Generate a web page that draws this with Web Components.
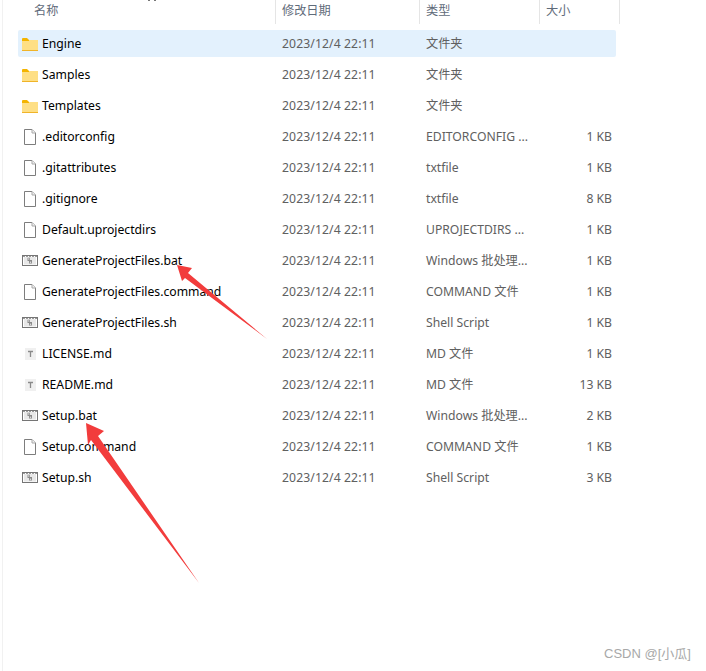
<!DOCTYPE html>
<html>
<head>
<meta charset="utf-8">
<title>Files</title>
<style>
  html, body { margin: 0; background: #fff; }
  body { width: 706px; height: 671px; overflow: hidden; position: relative; font-family: "Noto Sans", "Noto Sans CJK SC", sans-serif; }
</style>
</head>
<body>
<file-view>
  <file-header></file-header>
  <file-row icon="folder" name="Engine" date="2023/12/4 22:11" type="文件夹" selected></file-row>
  <file-row icon="folder" name="Samples" date="2023/12/4 22:11" type="文件夹"></file-row>
  <file-row icon="folder" name="Templates" date="2023/12/4 22:11" type="文件夹"></file-row>
  <file-row icon="file" name=".editorconfig" date="2023/12/4 22:11" type="EDITORCONFIG ..." size="1 KB"></file-row>
  <file-row icon="file" name=".gitattributes" date="2023/12/4 22:11" type="txtfile" size="1 KB"></file-row>
  <file-row icon="file" name=".gitignore" date="2023/12/4 22:11" type="txtfile" size="8 KB"></file-row>
  <file-row icon="file" name="Default.uprojectdirs" date="2023/12/4 22:11" type="UPROJECTDIRS ..." size="1 KB"></file-row>
  <file-row icon="script" name="GenerateProjectFiles.bat" date="2023/12/4 22:11" type="Windows 批处理..." size="1 KB"></file-row>
  <file-row icon="file" name="GenerateProjectFiles.command" date="2023/12/4 22:11" type="COMMAND 文件" size="1 KB"></file-row>
  <file-row icon="script" name="GenerateProjectFiles.sh" date="2023/12/4 22:11" type="Shell Script" size="1 KB"></file-row>
  <file-row icon="text" name="LICENSE.md" date="2023/12/4 22:11" type="MD 文件" size="1 KB"></file-row>
  <file-row icon="text" name="README.md" date="2023/12/4 22:11" type="MD 文件" size="13 KB"></file-row>
  <file-row icon="script" name="Setup.bat" date="2023/12/4 22:11" type="Windows 批处理..." size="2 KB"></file-row>
  <file-row icon="file" name="Setup.command" date="2023/12/4 22:11" type="COMMAND 文件" size="1 KB"></file-row>
  <file-row icon="script" name="Setup.sh" date="2023/12/4 22:11" type="Shell Script" size="3 KB"></file-row>
</file-view>
<red-arrows></red-arrows>
<water-mark>CSDN @[小瓜]</water-mark>

<script>
const icons = {
  folder: `<svg width="18" height="16" viewBox="0 0 18 16">
    <path d="M1 3Q1 2 2 2H6L8 4H1Z" fill="#f4b400"/>
    <path d="M1 4H17V14Q17 15 16 15H2Q1 15 1 14Z" fill="#fedf85"/>
    <path d="M1 14.500H17" stroke="#f0b429" fill="none"/>
    <path d="M1 4.500H8" stroke="#f4b400" fill="none"/>
  </svg>`,
  file: `<svg width="18" height="18" viewBox="0 0 18 18">
    <path d="M3.500 1.500H11L14.500 5V16.500H3.500Z" fill="#fff" stroke="#7d7d7d"/>
    <path d="M11 1.500V5H14.500" fill="#f2f2f2" stroke="#a8a8a8"/>
  </svg>`,
  script: `<svg width="18" height="18" viewBox="0 0 18 18">
    <rect x="1.500" y="3.500" width="15" height="10" fill="#fff" stroke="#757575"/>
    <path d="M2 4.500H16" stroke="#9a9a9a" stroke-dasharray="2 1"/>
    <rect x="3" y="5" width="12" height="7.500" fill="#e8e8e8"/>
    <path d="M6.500 5.800H9V8H11V11.500H8V9H6.500Z" fill="#8a8a8a"/>
    <circle cx="7.800" cy="7" r="0.700" fill="#e8e8e8"/>
    <circle cx="9.500" cy="10.300" r="0.700" fill="#e8e8e8"/>
  </svg>`,
  text: `<svg width="18" height="18" viewBox="0 0 18 18">
    <rect x="4" y="3" width="11" height="12" fill="#f0f0f0"/>
    <path d="M7 6.500H12M9.500 6.500V12" stroke="#8a8a8a" stroke-width="1.300" fill="none"/>
  </svg>`
};

class FileView extends HTMLElement {
  constructor() {
    super();
    this.attachShadow({ mode: 'open' }).innerHTML = `
      <style>
        :host { display: block; width: 620px; height: 671px; position: relative; }
        .rows { display: flex; flex-direction: column; padding: 6px 0 0 18px; }
        .edge { position: absolute; left: 2px; top: 0; width: 1px; height: 671px; background: #f1f1f1; }
        .clip { position: absolute; top: 0; width: 2px; height: 1px; background: #777; }
      </style>
      <div class="edge"></div>
      <div class="clip" style="left:148px"></div>
      <div class="clip" style="left:154px"></div>
      <slot name="header"></slot>
      <div class="rows"><slot></slot></div>`;
  }
  connectedCallback() {
    this.querySelector('file-header').slot = 'header';
  }
}

class FileHeader extends HTMLElement {
  constructor() {
    super();
    this.attachShadow({ mode: 'open' }).innerHTML = `
      <style>
        :host {
          display: grid;
          grid-template-columns: 276px 144px 120px 80px;
          height: 24px;
          font-size: 12.2px;
          color: #5f6b7a;
        }
        .c { border-right: 1px solid #e5e5e5; line-height: 21px; padding-left: 6px; }
        .first { padding-left: 34px; }
      </style>
      <div class="c first">名称</div><div class="c">修改日期</div><div class="c">类型</div><div class="c">大小</div>`;
  }
}

class FileRow extends HTMLElement {
  constructor() {
    super();
    this.attachShadow({ mode: 'open' }).innerHTML = `
      <style>
        :host {
          display: grid;
          grid-template-columns: 264px 144px 120px 66px;
          align-items: center;
          width: 598px;
          height: 27px;
          margin-bottom: 4px;
          padding-right: 4px;
          box-sizing: border-box;
          border-radius: 2px;
          font-size: 12.2px;
          line-height: 16px;
        }
        :host([selected]) { background: #e3f1fd; }
        .name { display: flex; align-items: center; color: #000; }
        .icon { display: flex; width: 24px; height: 18px; align-items: center; box-sizing: border-box; padding-left: 3px; }
        .date, .type, .size { color: #606060; }
        .date { letter-spacing: 0.1px; }
        .type { height: 16px; }
        .size { text-align: right; }
      </style>
      <div class="name"><span class="icon"></span><span id="name"></span></div>
      <div class="date"></div><div class="type"></div><div class="size"></div>`;
  }
  connectedCallback() {
    const s = this.shadowRoot;
    s.querySelector('.icon').innerHTML = icons[this.getAttribute('icon')];
    s.querySelector('#name').textContent = this.getAttribute('name');
    s.querySelector('.date').textContent = this.getAttribute('date');
    s.querySelector('.type').textContent = this.getAttribute('type');
    s.querySelector('.size').textContent = this.getAttribute('size') || '';
  }
}

// hand drawn annotation arrows, they sit over the list
class RedArrows extends HTMLElement {
  constructor() {
    super();
    this.attachShadow({ mode: 'open' }).innerHTML = `
      <style>
        :host { position: absolute; left: 0; top: 0; width: 706px; height: 671px; pointer-events: none; }
      </style>
      <svg width="706" height="671" viewBox="0 0 706 671">
        <path d="M177 265L192 268L188 273L267 339L185 278L182 281Z" fill="#f23c3c"/>
        <path d="M86 423L104 431L98 436L199 583L91 440L88 445Z" fill="#f23c3c"/>
      </svg>`;
  }
}

class WaterMark extends HTMLElement {
  constructor() {
    super();
    this.attachShadow({ mode: 'open' }).innerHTML = `
      <style>
        :host { position: absolute; left: 604px; top: 646px; font-size: 13px; line-height: 16px; color: #a8a8a8; white-space: nowrap; font-family: "Liberation Sans", "Noto Sans CJK SC", sans-serif; }
      </style>
      <slot></slot>`;
  }
}

customElements.define('file-view', FileView);
customElements.define('file-header', FileHeader);
customElements.define('file-row', FileRow);
customElements.define('red-arrows', RedArrows);
customElements.define('water-mark', WaterMark);
</script>
</body>
</html>
